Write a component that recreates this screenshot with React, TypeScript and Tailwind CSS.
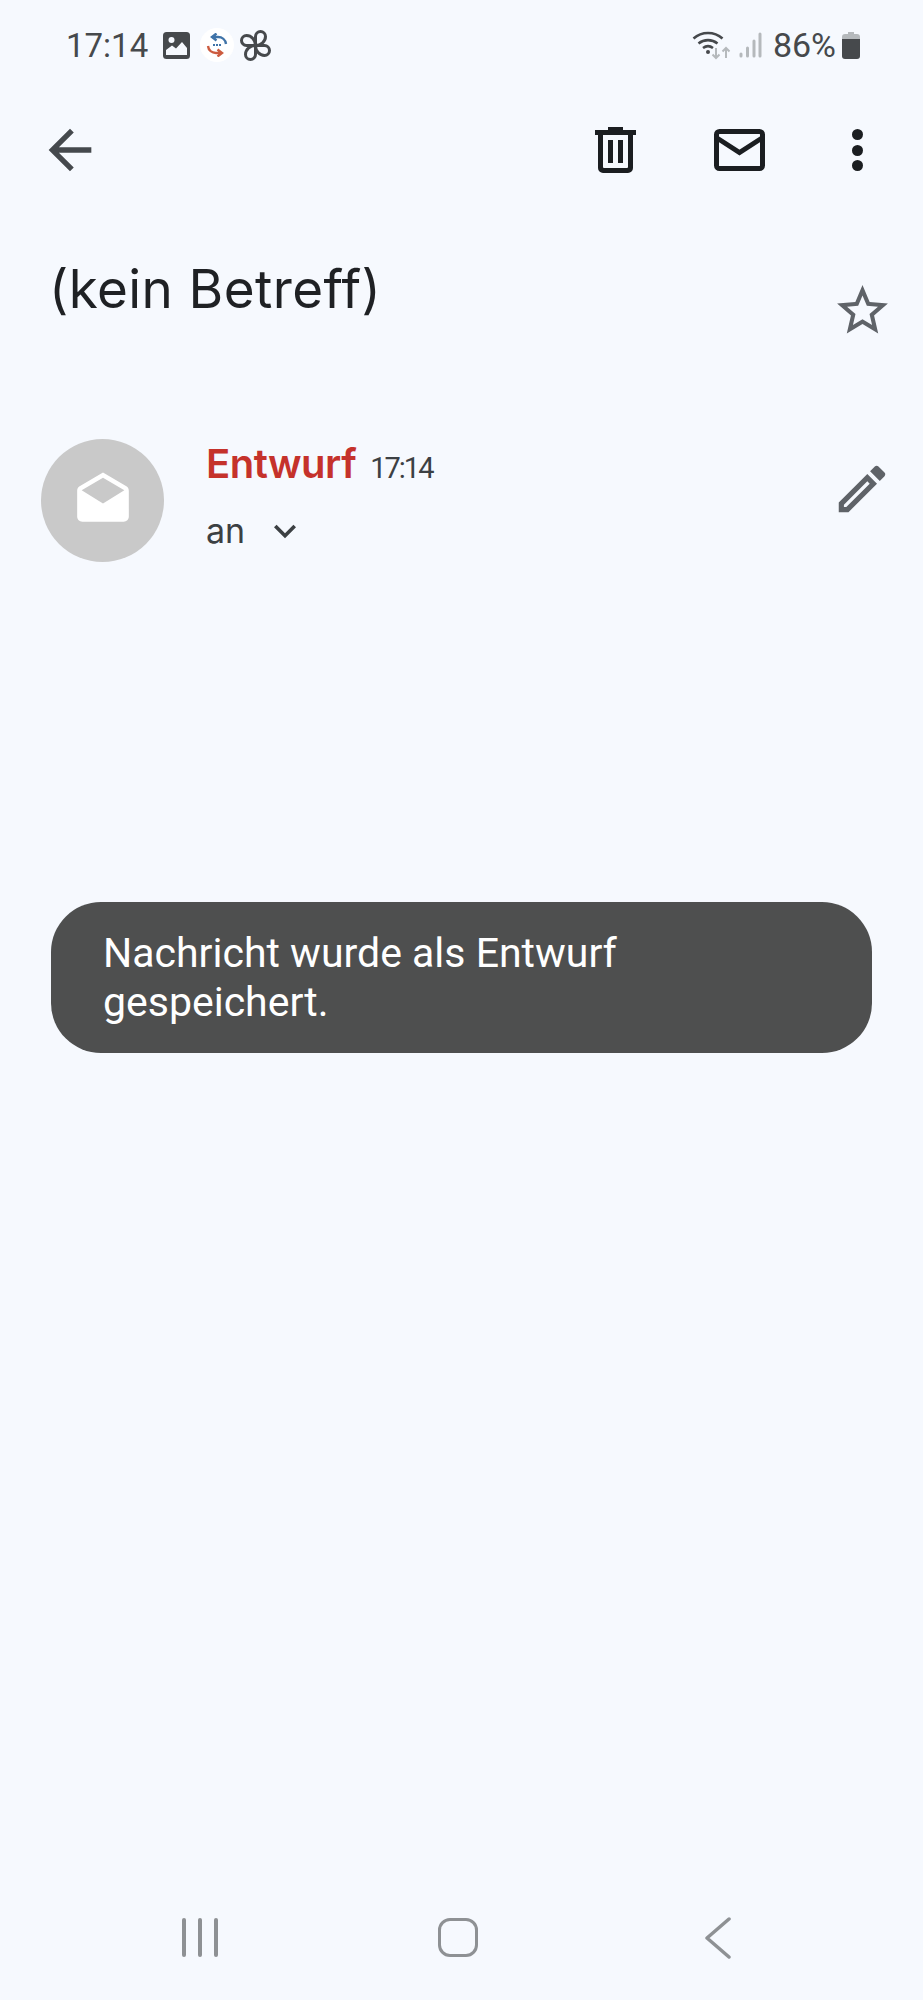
import React from "react";

const roboto = "font-['Roboto',sans-serif]";

function StatusBar() {
  return (
    <div className="flex h-[90px] items-center justify-between pl-[66px] pr-[63px] text-[#46494c]">
      <div className="flex items-center">
        <span className={`${roboto} text-[33px] leading-none`}>17:14</span>
        <svg className="ml-[15px]" width="27" height="27" viewBox="0 0 27 27">
          <rect width="27" height="27" rx="3.5" fill="#46494c" />
          <circle cx="8.5" cy="8" r="3" fill="#f6f9fe" />
          <path d="M3 23v-5l6-4.500 4 3 6-6.500 5 6v7z" fill="#f6f9fe" />
        </svg>
        <div className="ml-[10px] flex h-[34px] w-[34px] items-center justify-center rounded-full bg-white">
          <svg width="24" height="24" viewBox="0 0 24 24" fill="none">
            <path d="M21 11c-.500-4.500-4-7-8-7H8M11.500.500 7 4l4.500 3.500" stroke="#3f73a8" strokeWidth="2.400" />
            <path d="M3 13c.500 4.500 4 7 8 7h5M12.500 16.500 17 20l-4.500 3.500" stroke="#cc5b3f" strokeWidth="2.400" />
            <path d="M8 12h8" stroke="#3f73a8" strokeWidth="2" strokeDasharray="2 1" />
          </svg>
        </div>
        <svg className="ml-[6px]" width="31" height="31" viewBox="0 0 31 31" fill="none" stroke="#46494c" strokeWidth="3">
          <path d="M15.500 15.500V6.500a5 5 0 0 1 10 0c0 5-4.500 9-10 9z" />
          <path d="M15.500 15.500H24.500a5 5 0 0 1 0 10c-5 0-9-4.500-9-10z" />
          <path d="M15.500 15.500V24.500a5 5 0 0 1-10 0c0-5 4.500-9 10-9z" />
          <path d="M15.500 15.500H6.500a5 5 0 0 1 0-10c5 0 9 4.500 9 10z" />
        </svg>
      </div>
      <div className="flex items-center">
        <svg width="40" height="30" viewBox="0 0 40 30" fill="none">
          <path d="M1.500 8.500a22 22 0 0 1 29 0" stroke="#46494c" strokeWidth="2.600" />
          <path d="M6.500 13.500a15 15 0 0 1 19 0" stroke="#46494c" strokeWidth="2.600" />
          <path d="M11 18a8.500 8.500 0 0 1 10 0" stroke="#46494c" strokeWidth="2.600" />
          <circle cx="16" cy="22" r="2" fill="#46494c" />
          <path d="M24 18v10m-3.500-3.500L24 28l3.500-3.500" stroke="#b5b9bc" strokeWidth="2" />
          <path d="M34 28V18m-3.500 3.500L34 18l3.500 3.500" stroke="#b5b9bc" strokeWidth="2" />
        </svg>
        <svg className="ml-[6px]" width="24" height="26" viewBox="0 0 24 26" stroke="#b5b9bc" strokeWidth="3" strokeLinecap="round">
          <path d="M3 24v-2M9.500 24v-8M16 24V9M22 24V2" />
        </svg>
        <span className={`${roboto} ml-[11px] text-[34px] leading-none`}>86%</span>
        <svg className="ml-[6px]" width="18" height="27" viewBox="0 0 18 27">
          <path d="M6 0h6v2h3a3 3 0 0 1 3 3v2H0V5a3 3 0 0 1 3-3h3z" fill="#b5b9bc" />
          <path d="M0 7h18v17a3 3 0 0 1-3 3H3a3 3 0 0 1-3-3z" fill="#46494c" />
        </svg>
      </div>
    </div>
  );
}

function AppBar() {
  return (
    <div className="flex h-[120px] items-center pl-[38px] pr-[60px]">
      <svg width="64" height="64" viewBox="0 0 24 24" fill="#45494d">
        <path d="M20 11H7.830l5.590-5.590L12 4l-8 8 8 8 1.410-1.410L7.830 13H20v-2z" />
      </svg>
      <svg className="ml-auto" width="42" height="46" viewBox="0 0 42 46" fill="#1b1e21">
        <path d="M13 0h15v3h13v5H0V3h13z" />
        <path d="M3 8h5v32a1 1 0 0 0 1 1h23a1 1 0 0 0 1-1V8h5v33a5 5 0 0 1-5 5H8a5 5 0 0 1-5-5z" />
        <rect x="13" y="13" width="5" height="23" />
        <rect x="23" y="13" width="5" height="23" />
      </svg>
      <svg className="ml-[77px]" width="51" height="42" viewBox="0 0 51 42" fill="none">
        <rect x="2.500" y="2.500" width="46" height="37" rx="3" stroke="#1b1e21" strokeWidth="5" />
        <path d="M3 9l22.500 14.500L48 9" stroke="#1b1e21" strokeWidth="5" />
      </svg>
      <div className="ml-[87px] flex flex-col gap-[4.500px]">
        <span className="h-[11px] w-[11px] rounded-full bg-[#1b1e21]" />
        <span className="h-[11px] w-[11px] rounded-full bg-[#1b1e21]" />
        <span className="h-[11px] w-[11px] rounded-full bg-[#1b1e21]" />
      </div>
    </div>
  );
}

export default function App() {
  return (
    <div className="relative flex h-[2000px] w-[923px] flex-col overflow-hidden bg-[#f6f9fe]">
      <StatusBar />
      <AppBar />
      <div className="mt-[43px] flex items-start justify-between pl-[49px] pr-[30px]">
        <h1 className="font-['Inter',sans-serif] text-[53px] leading-[72px] font-normal tracking-[0.400px] text-[#1f2124]">(kein Betreff)</h1>
        <svg className="mt-[27px]" width="61" height="61" viewBox="0 0 24 24" fill="#5f6368">
          <path d="M22 9.240l-7.190-.620L12 2 9.190 8.630 2 9.240l5.460 4.730L5.820 21 12 17.270 18.180 21l-1.630-7.030L22 9.240zM12 15.400l-3.760 2.270 1-4.280-3.320-2.880 4.380-.380L12 6.100l1.710 4.040 4.380.380-3.320 2.880 1 4.280L12 15.400z" />
        </svg>
      </div>
      <div className="mt-[98px] flex items-start pl-[41px] pr-[30px]">
        <div className="flex h-[123px] w-[123px] items-center justify-center rounded-full bg-[#c9c9c9]">
          <svg width="62" height="62" viewBox="0 0 24 24" fill="#ffffff">
            <path d="M21.990 8c0-.720-.370-1.350-.940-1.700L12 1 2.950 6.300C2.380 6.650 2 7.280 2 8v10c0 1.100.900 2 2 2h16c1.100 0 2-.900 2-2l-.010-10zM12 13L3.740 7.840 12 3l8.260 4.840L12 13z" />
          </svg>
        </div>
        <div className="ml-[42px] flex flex-col">
          <div className="flex items-baseline">
            <span className="font-['Inter',sans-serif] text-[40px] leading-[50px] font-semibold tracking-[-0.500px] text-[#c5322b]">Entwurf</span>
            <span className={`${roboto} ml-[14px] text-[29px] leading-none tracking-[-2px] text-[#3c4043]`}>17:14</span>
          </div>
          <div className="mt-[20px] flex items-center">
            <span className="font-['Inter',sans-serif] text-[34px] leading-[44px] text-[#3c4043]">an</span>
            <svg className="ml-[18px]" width="44" height="44" viewBox="0 0 24 24" fill="#3c4043">
              <path d="M7.410 8.590L12 13.170l4.590-4.580L18 10l-6 6-6-6z" />
            </svg>
          </div>
        </div>
        <svg className="ml-auto mt-[19px]" width="62" height="62" viewBox="0 0 24 24" fill="#5f6368">
          <path d="M3 17.250V21h3.750L17.810 9.940l-3.750-3.750L3 17.250zM5.920 19H5v-.920l9.060-9.060.920.920L5.920 19zM20.710 5.630l-2.340-2.340c-.200-.200-.450-.290-.710-.290s-.510.100-.700.290l-1.830 1.830 3.750 3.750 1.830-1.830c.390-.390.390-1.020 0-1.410z" />
        </svg>
      </div>
      <div className="mx-[51px] mt-[340px] flex h-[151px] w-[821px] items-center rounded-[50px] bg-[#4e4f4f] px-[52px]">
        <p className={`${roboto} text-[41px] leading-[49px] text-white`}>Nachricht wurde als Entwurf gespeichert.</p>
      </div>
      <div className="mt-auto flex h-[126px] items-start pt-[44px]">
        <div className="ml-[182px] flex gap-[12.500px]">
          <span className="h-[39px] w-[3.500px] rounded-full bg-[#8e9194]" />
          <span className="h-[39px] w-[3.500px] rounded-full bg-[#8e9194]" />
          <span className="h-[39px] w-[3.500px] rounded-full bg-[#8e9194]" />
        </div>
        <div className="ml-[220px] h-[39px] w-[40px] rounded-[12px] border-[3.500px] border-[#8e9194]" />
        <svg className="ml-[227px] -mt-[1px]" width="26" height="42" viewBox="0 0 26 42" fill="none" stroke="#8e9194" strokeWidth="3.500" strokeLinecap="round" strokeLinejoin="round">
          <path d="M24 2L2 21l22 19" />
        </svg>
      </div>
    </div>
  );
}
